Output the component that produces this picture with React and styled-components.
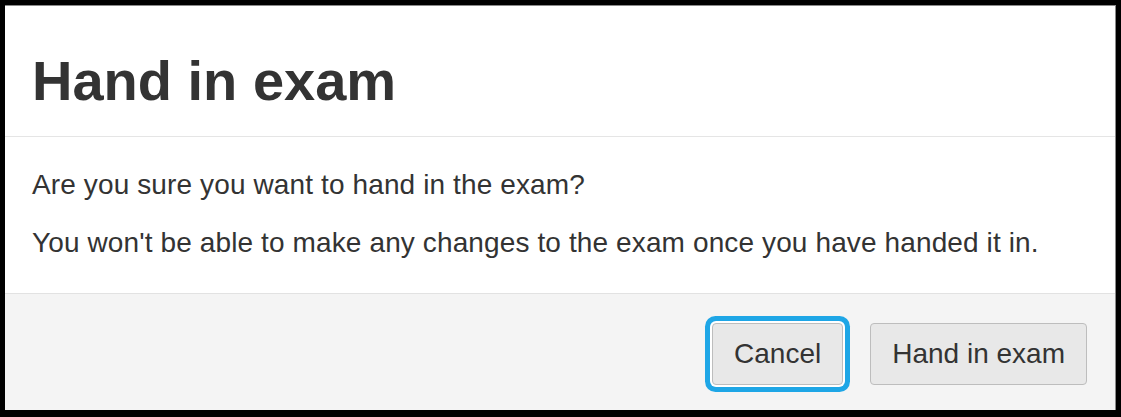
import React from "react";
import styled, { createGlobalStyle } from "styled-components";

const Global = createGlobalStyle`
  html, body { margin: 0; padding: 0; background: #000; }
  body { font-family: "Liberation Sans", Arial, Helvetica, sans-serif; }
  * { box-sizing: border-box; }
`;

const Frame = styled.div`
  width: 1121px;
  height: 417px;
  padding: 5px 5px 7px 5px;
  background: #000;
`;

const Modal = styled.div`
  display: flex;
  flex-direction: column;
  height: 405px;
  background: #fff;
  border-top: 1px solid #8a8a8a;
  border-right: 1px solid #8a8a8a;
`;

const Header = styled.div`
  padding: 47px 27px 27px;
  border-bottom: 1px solid #e5e5e5;
`;

const Title = styled.h1`
  margin: 0;
  font-size: 56px;
  line-height: 56px;
  font-weight: 700;
  color: #333;
`;

const Body = styled.div`
  padding: 28px 27px 30px;
  border-bottom: 1px solid #e2e2e2;
`;

const Para = styled.p`
  margin: 0;
  font-size: 28px;
  line-height: 40px;
  letter-spacing: 0.12px;
  color: #333;
  & + & { margin-top: 18px; }
`;

const Footer = styled.div`
  flex: 1;
  display: flex;
  justify-content: flex-end;
  align-items: flex-start;
  gap: 27px;
  padding: 29px 28px 25px;
  background: #f4f4f4;
`;

const Button = styled.button`
  height: 62px;
  padding: 0 21px;
  font-family: inherit;
  font-size: 28px;
  color: #333;
  background: #e8e8e8;
  border: 1px solid #bdbdbd;
  border-radius: 4px;
  box-shadow: ${(p) =>
    p.$focused ? "0 0 0 2px #fff, 0 0 0 7px #1ea6e6" : "none"};
  outline: none;
  cursor: pointer;
`;

export default function App() {
  return (
    <>
      <Global />
      <Frame>
        <Modal>
          <Header>
            <Title>Hand in exam</Title>
          </Header>
          <Body>
            <Para>Are you sure you want to hand in the exam?</Para>
            <Para>
              You won't be able to make any changes to the exam once you have
              handed it in.
            </Para>
          </Body>
          <Footer>
            <Button $focused>Cancel</Button>
            <Button>Hand in exam</Button>
          </Footer>
        </Modal>
      </Frame>
    </>
  );
}
